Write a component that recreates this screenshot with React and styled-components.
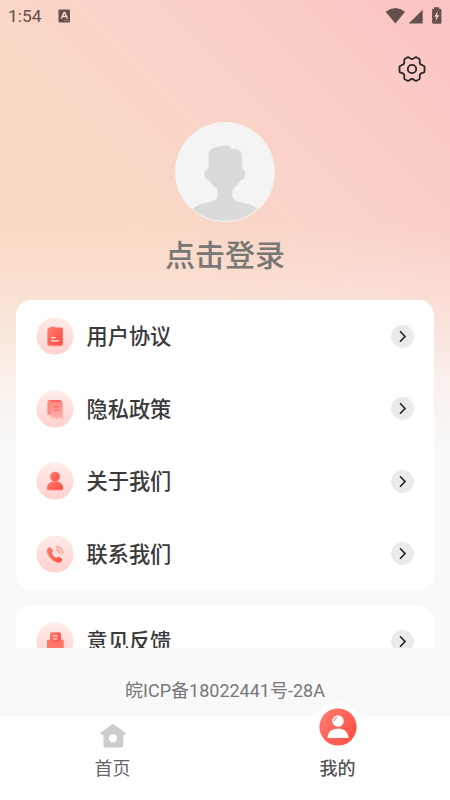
import React from "react";
import styled, { createGlobalStyle } from "styled-components";

const GlobalStyle = createGlobalStyle`
  * { box-sizing: border-box; }
  body { margin: 0; }
`;

const Screen = styled.div`
  width: 450px;
  height: 800px;
  display: flex;
  flex-direction: column;
  overflow: hidden;
  font-family: Roboto, "Noto Sans CJK SC", sans-serif;
  background:
    linear-gradient(to bottom, rgba(249, 249, 249, 0) 225px, rgba(249, 249, 249, 0.3) 300px, rgba(249, 249, 249, 0.75) 385px, #f9f9f9 450px),
    linear-gradient(45deg, #fad9c3 0, #fad9c4 38%, #fad4c8 60%, #facdc6 80%, #fac5c4 94%, #fac5c4 100%) 0 0 / 450px 450px no-repeat,
    #f9f9f9;
`;

const StatusBar = styled.header`
  height: 32px;
  flex: none;
  display: flex;
  align-items: center;
  justify-content: space-between;
  padding: 0 8px;
  color: #64504c;
`;

const StatusGroup = styled.div`
  display: flex;
  align-items: center;
  gap: ${(p) => p.$gap}px;
`;

const Clock = styled.span`
  font-size: 17.4px;
  line-height: 20px;
`;

const Toolbar = styled.div`
  height: 90px;
  flex: none;
  display: flex;
  justify-content: flex-end;
  padding: 23px 24px 0 0;
`;

const IconButton = styled.button`
  width: 28px;
  height: 28px;
  padding: 0;
  border: 0;
  background: none;
`;

const Profile = styled.section`
  height: 178px;
  flex: none;
  display: flex;
  flex-direction: column;
  align-items: center;
`;

const Avatar = styled.svg`
  width: 100px;
  height: 100px;
  display: block;
`;

const LoginText = styled.h1`
  margin: 12px 0 0;
  font-size: 30px;
  line-height: 44px;
  font-weight: 500;
  color: #777775;
`;

const MenuArea = styled.main`
  height: 347.5px;
  flex: none;
  overflow: hidden;
  display: flex;
  flex-direction: column;
  gap: 15px;
  padding: 0 16px;
`;

const Card = styled.section`
  flex: none;
  width: 417.5px;
  border-radius: 15px;
  background: #fff;
`;

const Row = styled.div`
  height: 72.5px;
  display: flex;
  align-items: center;
  padding: 0 20px;
`;

const Badge = styled.svg`
  width: 38px;
  height: 38px;
  flex: none;
`;

const Label = styled.span`
  flex: 1;
  margin-left: 12.5px;
  padding-top: 2px;
  font-size: 21.2px;
  line-height: 32px;
  font-weight: 500;
  color: #3a3a3a;
`;

const Arrow = styled.svg`
  width: 23px;
  height: 23px;
  flex: none;
`;

const License = styled.footer`
  height: 68.5px;
  flex: none;
  display: flex;
  justify-content: center;
  padding-top: 29px;
  background: #f9f9f9;
  color: #777;
  font-size: 18px;
  line-height: 28px;
`;

const TabBar = styled.nav`
  height: 84px;
  flex: none;
  display: grid;
  grid-template-columns: 1fr 1fr;
  background: #fff;
`;

const Tab = styled.div`
  display: flex;
  flex-direction: column;
  align-items: center;
  color: ${(p) => (p.$active ? "#555" : "#666")};
  font-size: 18px;
  line-height: 26px;
  font-weight: ${(p) => (p.$active ? 500 : 400)};
`;

const HomeIcon = styled.svg`
  width: 26px;
  height: 24px;
  margin: 7.5px 0 8.5px;
`;

const ActiveIcon = styled.svg`
  width: 60px;
  height: 54px;
  margin: -15px 0 1px;
`;

const icons = {
  document: (
    <>
      <path d="M11.500 12.500q0-2 2-2H25q1.700 0 1.700 1.700v14.600q0 1.700-1.700 1.700H13.200q-1.700 0-1.700-1.700z" fill="url(#red)" />
      <path d="M15 9.800h4.200v5l-2.100-1.200-2.100 1.200z" fill="#ff7167" />
      <path d="M15.200 20.600h4.600M15.200 23.900h8" stroke="#fff" strokeOpacity=".85" strokeWidth="1.200" />
    </>
  ),
  policy: (
    <>
      <path d="M13.200 10H24q2 0 2 2.500v2H12q-.5-4.500 1.200-4.500z" fill="#ff685e" />
      <path d="M13.200 10q2 .5 2 3v11.500h-3.700V12q0-2 1.700-2z" fill="#ff8c84" />
      <path d="M15 12h11.600v16.200l-3-1.700-2.700 1.700-2.700-1.700-3.200 1.700z" fill="url(#paleRed)" />
      <path d="M17.500 16.600h5.500M18.500 20.300h5" stroke="#ff6057" strokeWidth="1.100" />
    </>
  ),
  person: (
    <>
      <circle cx="19" cy="14.500" r="4.800" fill="url(#red)" />
      <path d="M11 26.500q0-6 6-7h4q6 1 6 7 0 1.200-1.200 1.200H12.200q-1.200 0-1.200-1.200z" fill="url(#red)" />
    </>
  ),
  phone: (
    <>
      <path d="M11.200 14q1.200-2 3-1.800l2.600 3.100q.4.7-.4 1.500l-.9 1.200q1.400 3.500 4.900 4.900l1.300-.9q.8-.6 1.500-.2l2.800 2.100q.5 2-1.600 3.200c-5.200 1.900-15-7.500-13.200-13.100z" fill="url(#red)" />
      <path d="M20.300 11.300q5.800.5 6.600 6.700M20.500 14.400q2.700.4 3.300 3.400" fill="none" stroke="#ff9f98" strokeWidth="1.200" strokeLinecap="round" />
    </>
  ),
  feedback: (
    <>
      <path d="M14 12.300q0-2 2-2h7q2 0 2 2v10H14z" fill="url(#red)" />
      <path d="M11 18.500q0-.8.800-.8H14q.5 2.300 5.200 2.800 4.300-.5 5.300-2.800h2.300q.8 0 .8.800v9q0 2-2 2H13q-2 0-2-2z" fill="#ff756b" />
      <path d="M17 13.800h4.500M17 16.800h4.500" stroke="#ffd1cd" strokeWidth="1.200" />
    </>
  ),
};

function MenuRow({ icon, children }) {
  return (
    <Row>
      <Badge viewBox="0 0 38 38">
        <circle cx="19" cy="19" r="18.600" fill="url(#badge)" />
        <g filter="url(#iconShadow)">{icons[icon]}</g>
      </Badge>
      <Label>{children}</Label>
      <Arrow viewBox="0 0 23 23">
        <circle cx="11.500" cy="11.500" r="11.400" fill="#eaeaea" />
        <path d="m9 6.200 5 5.300-5 5.300" fill="none" stroke="#222" strokeWidth="1.600" />
      </Arrow>
    </Row>
  );
}

const Defs = styled.svg`
  display: block;
  width: 0;
  height: 0;
`;

function Gradients() {
  return (
    <Defs>
      <defs>
        <linearGradient id="badge" x1="0" y1="0" x2="0" y2="1">
          <stop stopColor="#ffece9" />
          <stop offset="1" stopColor="#ffd1cd" />
        </linearGradient>
        <linearGradient id="red" x1="0" y1="0" x2="1" y2=".7">
          <stop stopColor="#ff7d73" />
          <stop offset="1" stopColor="#ff5145" />
        </linearGradient>
        <linearGradient id="paleRed" x1="0" y1="0" x2="0" y2="1">
          <stop stopColor="#ff8880" />
          <stop offset="1" stopColor="#ffb0aa" />
        </linearGradient>
        <filter id="iconShadow" x="-20%" y="-20%" width="140%" height="150%">
          <feDropShadow dx="0" dy="1" stdDeviation=".6" floodColor="#ff675d" floodOpacity=".35" />
        </filter>
        <clipPath id="avatarClip"><circle cx="50" cy="50" r="49" /></clipPath>
      </defs>
    </Defs>
  );
}

export default function App() {
  return (
    <>
      <GlobalStyle />
      <Screen>
        <Gradients />
        <StatusBar>
          <StatusGroup $gap={16}>
            <Clock>1:54</Clock>
            <svg width="13" height="14" viewBox="0 0 13 14">
              <rect x=".5" y=".5" width="11.500" height="13" rx="1" fill="currentColor" />
              <path d="m3.300 9.500 2.800-6h.6l2.800 6M4.500 7.600h3.700" fill="none" stroke="#fad8c9" strokeWidth="1.500" />
              <path d="M6 11.700h5" stroke="#a68c83" strokeWidth=".8" />
            </svg>
          </StatusGroup>
          <svg width="57" height="18" viewBox="385 6 57 18" fill="currentColor">
            <path d="M385.600 10.700q9.800-7.200 19.500 0L395.400 22.500z" />
            <path d="M422.700 8.800v13.700h-14z" />
            <path d="M434 7.800V6.300h5v1.500h1.300q1.100 0 1.100 1.200v12.500q0 1.200-1.100 1.200h-7q-1.200 0-1.200-1.200V9q0-1.200 1.200-1.200z" />
            <path d="m437.700 10-3.300 5.700h2l-.9 4.500 3.600-6h-2z" fill="#fac9c6" />
          </svg>
        </StatusBar>
        <Toolbar>
          <IconButton aria-label="设置">
            <svg width="28" height="28" viewBox="0 0 28 28" fill="none" stroke="#252525" strokeWidth="1.800" strokeLinejoin="round">
              <path d="M9.600 2.300C11 1.500 11.700 4 14 4s3-2.500 4.400-1.700l2.900 1.700c1.500.9-.4 2.800.7 4.700s4.500 1.300 4.500 3.100v4.600c0 1.800-3.400 1.200-4.500 3.100s.8 3.800-.7 4.700l-2.900 1.600C17 26.500 16.300 24 14 24s-3 2.500-4.400 1.800l-2.900-1.600c-1.500-.9.400-2.800-.7-4.700s-4.500-1.300-4.500-3.100v-4.600C1.500 10 4.900 10.600 6 8.700S5.200 4.900 6.700 4z" />
              <circle cx="14" cy="14" r="4.200" />
            </svg>
          </IconButton>
        </Toolbar>
        <Profile>
          <Avatar viewBox="0 0 100 100">
            <circle cx="50" cy="50" r="50" fill="#f4f4f4" />
            <path clipPath="url(#avatarClip)" fill="#dadada" d="M33.500 47V34q0-7 7.500-9l10-1.700q3-.8 6 3.700h4q6 1 6 7v13q3 .5 3 5 0 6-4.500 6-2 5-8 9.500V75q1 4 9 5.500 12 1.500 17 8V110H16V89q4-6.500 17-8.500 8.500-1.500 9.500-5.500v-8q-6-4-8.500-9-4.500 0-4.500-6-.5-4.500 4-5z" />
          </Avatar>
          <LoginText>点击登录</LoginText>
        </Profile>
        <MenuArea>
          <Card>
            <MenuRow icon="document">用户协议</MenuRow>
            <MenuRow icon="policy">隐私政策</MenuRow>
            <MenuRow icon="person">关于我们</MenuRow>
            <MenuRow icon="phone">联系我们</MenuRow>
          </Card>
          <Card>
            <MenuRow icon="feedback">意见反馈</MenuRow>
          </Card>
        </MenuArea>
        <License>皖ICP备18022441号-28A</License>
        <TabBar>
          <Tab>
            <HomeIcon viewBox="0 0 26 24">
              <path d="M11.500.8q1.500-1.200 3 0L25.600 9q.4 1.700-1 1.700h-1.300V21q0 2.500-2.500 2.500H6Q3.500 23.500 3.500 21V10.700H1.600Q0 10.700.4 9zM13 10.300a4 4 0 1 0 0 8 4 4 0 0 0 0-8z" fill="#ccc" fillRule="evenodd" />
            </HomeIcon>
            首页
          </Tab>
          <Tab $active>
            <ActiveIcon viewBox="0 0 60 54">
              <path d="M3 15q6-1 9-5 7-8 18-8t18 8q3 4 9 5v24H3z" fill="#fff" />
              <circle cx="30" cy="26" r="18.600" fill="url(#red)" />
              <g filter="url(#iconShadow)" fill="#fff">
                <circle cx="30" cy="20" r="5.700" />
                <path d="M19.500 36.500q1-8.800 10.500-9 9.500.2 10.500 9 0 .5-.5.500H20q-.5 0-.5-.5z" />
              </g>
              <path d="M26.300 20q.1-3 3-3.700" fill="none" stroke="#ff7065" strokeWidth="1" />
            </ActiveIcon>
            我的
          </Tab>
        </TabBar>
      </Screen>
    </>
  );
}
